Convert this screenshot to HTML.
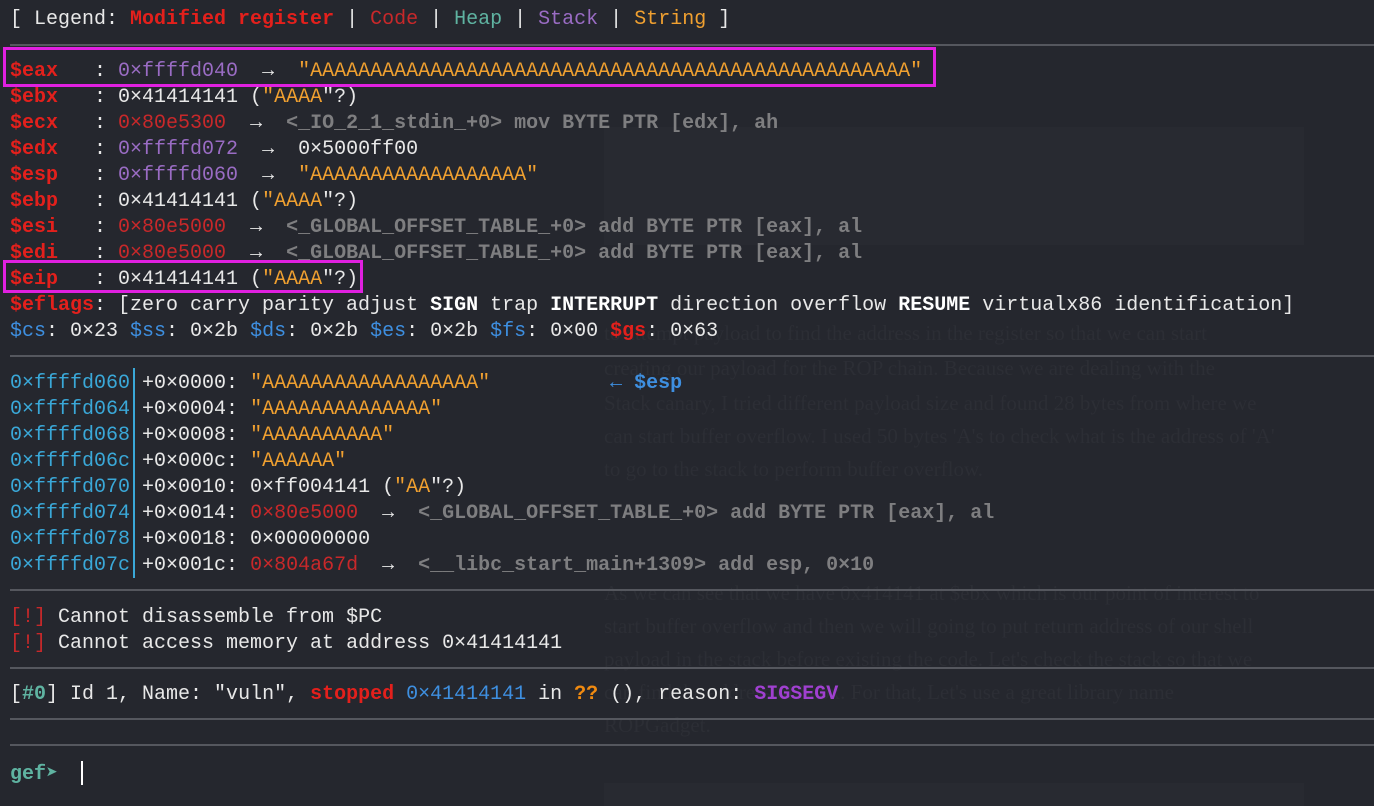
<!DOCTYPE html>
<html><head><meta charset="utf-8"><style>
html,body{margin:0;padding:0;background:#25272e;width:1374px;height:806px;overflow:hidden}
body{position:relative;font-family:"Liberation Mono",monospace;font-size:20px;color:#e8e8e8}
.l{position:absolute;left:10px;white-space:pre;line-height:26px;height:26px}
.sep{position:absolute;left:10px;right:0;height:2px;background:#55575e}
.bg{position:absolute;left:604px;white-space:pre;font-family:"Liberation Serif",serif;font-size:21px;color:#2c2e35;line-height:26px}
.r{color:#e3201c;font-weight:bold}
.c{color:#c8282a}.h{color:#5fb3a1}.s{color:#9a6cc4}.st{color:#f0a030}
.g{color:#7e7e80;font-weight:bold}
.w{color:#fff;font-weight:bold}
.b{color:#3e8fe0}.cy{color:#3aa8d8}
.box{position:absolute;border:3px solid #e020e0}
</style></head><body>
<div style="position:absolute;left:604px;top:127px;width:700px;height:118px;background:#282a31"></div>
<div class="bg" style="top:320px">to attempt payload to find the address in the register so that we can start</div>
<div class="bg" style="top:355px">creating our payload for the ROP chain. Because we are dealing with the</div>
<div class="bg" style="top:390px">Stack canary, I tried different payload size and found 28 bytes from where we</div>
<div class="bg" style="top:423px">can start buffer overflow. I used 50 bytes 'A's to check what is the address of 'A'</div>
<div class="bg" style="top:456px">to go to the stack to perform buffer overflow.</div>
<div class="bg" style="top:580px">As we can see that we have 0x414141 at $ebx which is our point of interest to</div>
<div class="bg" style="top:613px">start buffer overflow and then we will going to put return address of our shell</div>
<div class="bg" style="top:646px">payload in the stack before existing the code. Let's check the stack so that we</div>
<div class="bg" style="top:679px">can find the address of $ebx. For that, Let's use a great library name</div>
<div class="bg" style="top:712px">ROPGadget.</div>
<div style="position:absolute;left:604px;top:783px;width:700px;height:23px;background:#282a31"></div>

<div class="l" style="top:7px">[ Legend: <span class="r">Modified register</span> | <span class="c">Code</span> | <span class="h">Heap</span> | <span class="s">Stack</span> | <span class="st">String</span> ]</div>
<div class="sep" style="top:44px"></div>
<div class="l" style="top:59px"><span class="r">$eax</span>   : <span class="s">0×ffffd040</span>  →  <span class="st">"AAAAAAAAAAAAAAAAAAAAAAAAAAAAAAAAAAAAAAAAAAAAAAAAAA"</span></div>
<div class="l" style="top:85px"><span class="r">$ebx</span>   : 0×41414141 (<span class="st">"AAAA</span>"?)</div>
<div class="l" style="top:111px"><span class="r">$ecx</span>   : <span class="c">0×80e5300</span>  →  <span class="g">&lt;_IO_2_1_stdin_+0&gt; mov BYTE PTR [edx], ah</span></div>
<div class="l" style="top:137px"><span class="r">$edx</span>   : <span class="s">0×ffffd072</span>  →  0×5000ff00</div>
<div class="l" style="top:163px"><span class="r">$esp</span>   : <span class="s">0×ffffd060</span>  →  <span class="st">"AAAAAAAAAAAAAAAAAA"</span></div>
<div class="l" style="top:189px"><span class="r">$ebp</span>   : 0×41414141 (<span class="st">"AAAA</span>"?)</div>
<div class="l" style="top:215px"><span class="r">$esi</span>   : <span class="c">0×80e5000</span>  →  <span class="g">&lt;_GLOBAL_OFFSET_TABLE_+0&gt; add BYTE PTR [eax], al</span></div>
<div class="l" style="top:241px"><span class="r">$edi</span>   : <span class="c">0×80e5000</span>  →  <span class="g">&lt;_GLOBAL_OFFSET_TABLE_+0&gt; add BYTE PTR [eax], al</span></div>
<div class="l" style="top:267px"><span class="r">$eip</span>   : 0×41414141 (<span class="st">"AAAA</span>"?)</div>
<div class="l" style="top:293px"><span class="r">$eflags</span>: [zero carry parity adjust <span class="w">SIGN</span> trap <span class="w">INTERRUPT</span> direction overflow <span class="w">RESUME</span> virtualx86 identification]</div>
<div class="l" style="top:319px"><span class="b">$cs</span>: 0×23 <span class="b">$ss</span>: 0×2b <span class="b">$ds</span>: 0×2b <span class="b">$es</span>: 0×2b <span class="b">$fs</span>: 0×00 <span class="r">$gs</span>: 0×63</div>
<div class="box" style="left:3px;top:47px;width:927px;height:34px"></div>
<div class="box" style="left:3px;top:260px;width:354px;height:27px"></div>
<div class="sep" style="top:355px"></div>
<div style="position:absolute;left:133px;top:368px;width:2px;height:210px;background:#3aa8d8"></div>
<div class="l" style="top:371px"><span class="cy">0×ffffd060</span> +0×0000: <span class="st">"AAAAAAAAAAAAAAAAAA"</span>          <span class="b" style="font-weight:bold">← $esp</span></div>
<div class="l" style="top:397px"><span class="cy">0×ffffd064</span> +0×0004: <span class="st">"AAAAAAAAAAAAAA"</span></div>
<div class="l" style="top:423px"><span class="cy">0×ffffd068</span> +0×0008: <span class="st">"AAAAAAAAAA"</span></div>
<div class="l" style="top:449px"><span class="cy">0×ffffd06c</span> +0×000c: <span class="st">"AAAAAA"</span></div>
<div class="l" style="top:475px"><span class="cy">0×ffffd070</span> +0×0010: 0×ff004141 (<span class="st">"AA</span>"?)</div>
<div class="l" style="top:501px"><span class="cy">0×ffffd074</span> +0×0014: <span class="c">0×80e5000</span>  →  <span class="g">&lt;_GLOBAL_OFFSET_TABLE_+0&gt; add BYTE PTR [eax], al</span></div>
<div class="l" style="top:527px"><span class="cy">0×ffffd078</span> +0×0018: 0×00000000</div>
<div class="l" style="top:553px"><span class="cy">0×ffffd07c</span> +0×001c: <span class="c">0×804a67d</span>  →  <span class="g">&lt;__libc_start_main+1309&gt; add esp, 0×10</span></div>
<div class="sep" style="top:589px"></div>
<div class="l" style="top:605px"><span class="c">[!]</span> Cannot disassemble from $PC</div>
<div class="l" style="top:631px"><span class="c">[!]</span> Cannot access memory at address 0×41414141</div>
<div class="sep" style="top:667px"></div>
<div class="l" style="top:682px">[<span class="h" style="font-weight:bold">#0</span>] Id 1, Name: "vuln", <span class="r">stopped</span> <span class="b">0×41414141</span> in <span style="color:#f08a10;font-weight:bold">??</span> (), reason: <span style="color:#a040d0;font-weight:bold">SIGSEGV</span></div>
<div class="sep" style="top:718px"></div>
<div class="sep" style="top:744px"></div>
<div class="l" style="top:762px"><span class="h" style="font-weight:bold">gef➤</span>  </div>
<div style="position:absolute;left:81px;top:761px;width:2px;height:24px;background:#fff"></div>
</body></html>
